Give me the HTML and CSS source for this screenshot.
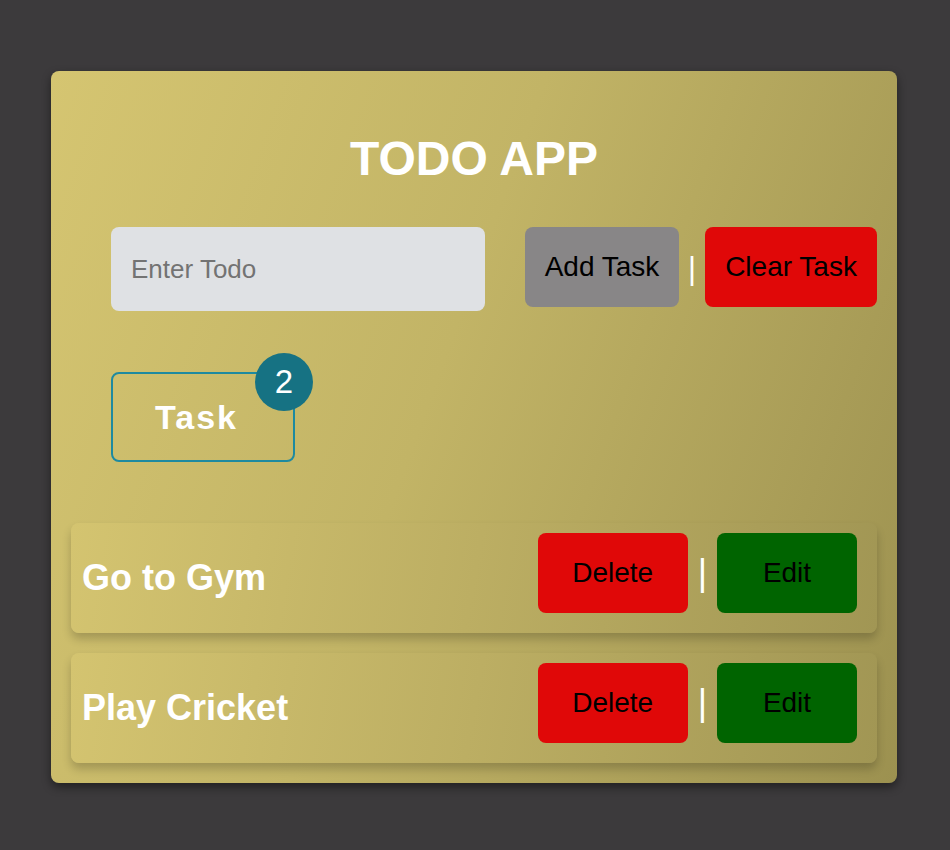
FILE: index.html
```html
<!DOCTYPE html>
<html lang="en">
<head>
  <meta charset="UTF-8" />
  <meta name="viewport" content="width=device-width, initial-scale=1" />
  <title>Todo App</title>
  <link rel="stylesheet" href="styles.css">
</head>
<body>

  <main class="todo-card">
    <h1>TODO APP</h1>

    <div class="todo-form">
      <input type="text" id="todo-input" placeholder="Enter Todo" aria-label="Enter Todo" />
      <button class="btn btn-add" onclick="addTask()">Add Task</button>
      <span class="sep">|</span>
      <button class="btn btn-clear" onclick="clearTasks()">Clear Task</button>
    </div>

    <div class="task-counter">
      Task
      <span class="badge" id="task-count">2</span>
    </div>

    <ul class="task-list" id="task-list">
      <li class="task-item">
        <span class="task-name">Go to Gym</span>
        <div class="task-actions">
          <button class="btn btn-delete">Delete</button>
          <span class="sep">|</span>
          <button class="btn btn-edit">Edit</button>
        </div>
      </li>
      <li class="task-item">
        <span class="task-name">Play Cricket</span>
        <div class="task-actions">
          <button class="btn btn-delete">Delete</button>
          <span class="sep">|</span>
          <button class="btn btn-edit">Edit</button>
        </div>
      </li>
    </ul>
  </main>

</body>
</html>
```

FILE: styles.css
```css
:root {
  --page-bg: #3c3a3c;
  --red: #e00808;
  --green: #006400;
  --teal: #1e8aa0;
  --font-family: "Liberation Sans", Arial, sans-serif;
}

* {
  box-sizing: border-box;
}

body {
  margin: 0;
  background: var(--page-bg);
  font-family: var(--font-family);
  min-height: 100vh;
}

.todo-card {
  width: 846px;
  margin: 71px 0 0 51px;
  padding: 0 20px 20px;
  border-radius: 8px;
  background: linear-gradient(110deg, #d5c571 0%, #c2b466 45%, #9c9150 100%);
  box-shadow: 0 4px 10px rgba(0, 0, 0, 0.45);
}

.todo-card h1 {
  margin: 0;
  padding-top: 60px;
  text-align: center;
  font-size: 48px;
  font-weight: 700;
  color: #fff;
}

.todo-form {
  display: flex;
  align-items: flex-start;
  margin-top: 41px;
  padding-left: 40px;
}

#todo-input {
  width: 374px;
  height: 84px;
  margin-right: 40px;
  padding: 0 20px;
  border: none;
  border-radius: 8px;
  background: #dfe1e4;
  font-family: var(--font-family);
  font-size: 26px;
  color: #222;
  outline: none;
}

#todo-input::placeholder {
  color: #737373;
}

.btn {
  height: 80px;
  border: none;
  border-radius: 8px;
  font-family: var(--font-family);
  font-size: 28px;
  color: #000;
  cursor: pointer;
}

.btn-add {
  width: 154px;
  background: #888687;
}

.btn-clear {
  width: 172px;
  background: var(--red);
}

.sep {
  margin: 0 9px;
  color: #fff;
  font-size: 31px;
  align-self: center;
}

.task-counter {
  position: relative;
  width: 184px;
  height: 90px;
  margin: 61px 0 0 40px;
  padding-right: 13px;
  border: 2px solid var(--teal);
  border-radius: 8px;
  display: flex;
  align-items: center;
  justify-content: center;
  font-size: 34px;
  font-weight: 700;
  letter-spacing: 2px;
  color: #fff;
}

.badge {
  position: absolute;
  top: -21px;
  right: -20px;
  width: 58px;
  height: 58px;
  border-radius: 50%;
  background: #167283;
  display: flex;
  align-items: center;
  justify-content: center;
  font-size: 33px;
  font-weight: 400;
  letter-spacing: 0;
}

.task-list {
  list-style: none;
  margin: 61px 0 0;
  padding: 0;
  display: flex;
  flex-direction: column;
  gap: 20px;
}

.task-item {
  height: 110px;
  padding: 0 20px 0 11px;
  border-radius: 8px;
  background: linear-gradient(100deg, #d4c470 0%, #bcae63 50%, #a19654 100%);
  box-shadow: 0 6px 10px rgba(0, 0, 0, 0.2);
  display: flex;
  align-items: center;
  justify-content: space-between;
}

.task-name {
  font-size: 36px;
  font-weight: 700;
  color: #fff;
}

.task-actions {
  display: flex;
  align-items: center;
  align-self: flex-start;
  margin-top: 10px;
}

.task-actions .sep {
  margin: 0 10px;
  font-size: 36px;
}

.btn-delete {
  width: 150px;
  background: var(--red);
}

.btn-edit {
  width: 140px;
  background: var(--green);
}
```
